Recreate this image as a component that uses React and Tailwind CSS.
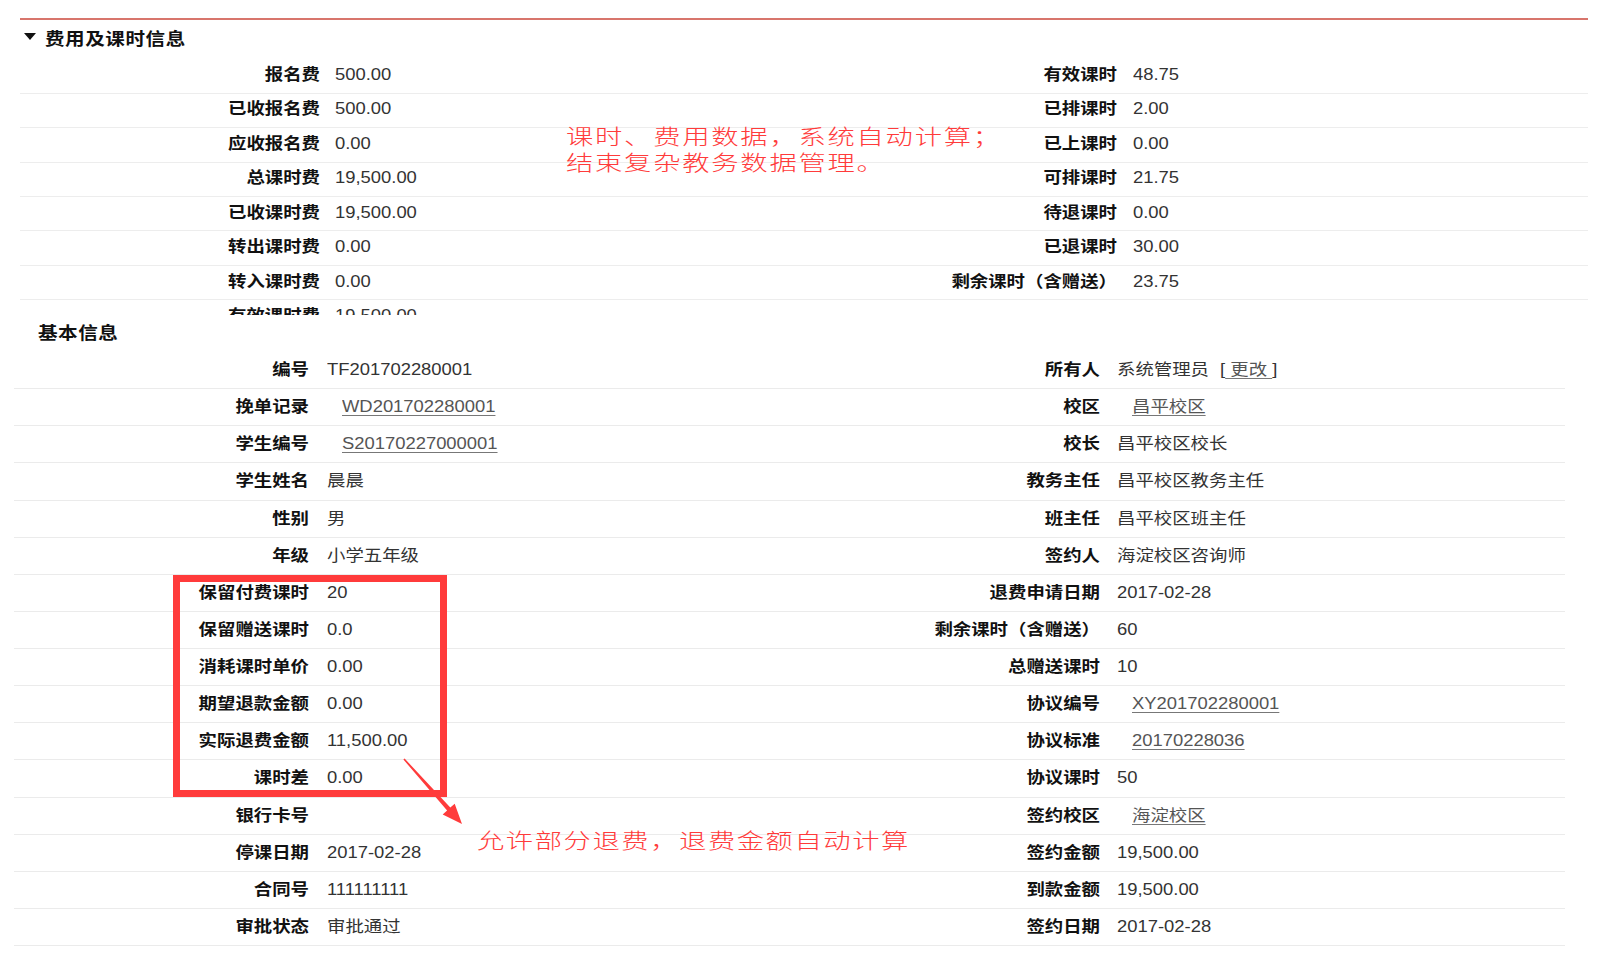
import React from "react";

const topRows = [
  ["报名费", "500.00", "有效课时", "48.75"],
  ["已收报名费", "500.00", "已排课时", "2.00"],
  ["应收报名费", "0.00", "已上课时", "0.00"],
  ["总课时费", "19,500.00", "可排课时", "21.75"],
  ["已收课时费", "19,500.00", "待退课时", "0.00"],
  ["转出课时费", "0.00", "已退课时", "30.00"],
  ["转入课时费", "0.00", "剩余课时（含赠送）", "23.75"],
  ["有效课时费", "19,500.00", "", ""],
];

const L = (t) => ({ t, link: true });

const bottomRows = [
  ["编号", "TF201702280001", "所有人", "OWNER"],
  ["挽单记录", L("WD201702280001"), "校区", L("昌平校区")],
  ["学生编号", L("S20170227000001"), "校长", "昌平校区校长"],
  ["学生姓名", "晨晨", "教务主任", "昌平校区教务主任"],
  ["性别", "男", "班主任", "昌平校区班主任"],
  ["年级", "小学五年级", "签约人", "海淀校区咨询师"],
  ["保留付费课时", "20", "退费申请日期", "2017-02-28"],
  ["保留赠送课时", "0.0", "剩余课时（含赠送）", "60"],
  ["消耗课时单价", "0.00", "总赠送课时", "10"],
  ["期望退款金额", "0.00", "协议编号", L("XY201702280001")],
  ["实际退费金额", "11,500.00", "协议标准", L("20170228036")],
  ["课时差", "0.00", "协议课时", "50"],
  ["银行卡号", "", "签约校区", L("海淀校区")],
  ["停课日期", "2017-02-28", "签约金额", "19,500.00"],
  ["合同号", "111111111", "到款金额", "19,500.00"],
  ["审批状态", "审批通过", "签约日期", "2017-02-28"],
];

function Value({ v }) {
  if (!v) return null;
  if (v === "OWNER") {
    return (
      <span className="inline-block scale-x-[1.15] origin-left whitespace-pre text-[#333]">
        系统管理员
        <span className="ml-[9.6px]">[</span>
        <span className="underline underline-offset-[3px] decoration-[#777] text-[#555]">
          {"\u00a0更改\u00a0"}
        </span>
        <span>]</span>
      </span>
    );
  }
  if (typeof v === "object") {
    return (
      <span className="ml-[15px] inline-block scale-x-[1.15] origin-left text-[#555] underline underline-offset-[3px] decoration-[#777]">
        {v.t}
      </span>
    );
  }
  return <span className="inline-block scale-x-[1.15] origin-left text-[#333]">{v}</span>;
}

function Label({ t }) {
  return <span className="inline-block scale-x-[1.15] origin-right font-bold text-[#111]">{t}</span>;
}

function Triangle() {
  return (
    <svg width="12" height="7" viewBox="0 0 12 7" className="mb-[6px] ml-[4px] shrink-0">
      <polygon points="0,0 12,0 6,7" fill="#111" />
    </svg>
  );
}

export default function App() {
  return (
    <div className="relative w-[1604px] h-[966px] overflow-hidden bg-white font-['Liberation_Sans','Noto_Sans_CJK_SC',sans-serif] text-[16px] leading-none text-black">
      {/* 费用及课时信息 */}
      <div className="h-[315px] overflow-hidden pt-[18px] pl-[20px] pr-[16px]">
        <div className="h-[2px] bg-[#d8756c]" />
        <div className="h-[39.3px] flex items-center">
          <Triangle />
          <span className="ml-[9px] inline-block scale-x-[1.15] origin-left text-[17px] font-bold tracking-[0.5px] text-[#111]">
            费用及课时信息
          </span>
        </div>
        {topRows.map((r, i) => (
          <div key={i} className="h-[34.43px] flex items-center border-b border-[#ededed] pb-[2px]">
            <div className="w-[300px] text-right">
              <Label t={r[0]} />
            </div>
            <div className="w-[515px] pl-[15px]">
              <Value v={r[1]} />
            </div>
            <div className="w-[282px] text-right">
              <Label t={r[2]} />
            </div>
            <div className="flex-1 pl-[16px]">
              <Value v={r[3]} />
            </div>
          </div>
        ))}
      </div>

      {/* 基本信息 */}
      <div className="pl-[14px] w-[1565px]">
        <div className="h-[37px] flex items-center pl-[24px]">
          <span className="inline-block scale-x-[1.15] origin-left text-[17px] font-bold tracking-[0.5px] text-[#111]">
            基本信息
          </span>
        </div>
        {bottomRows.map((r, i) => (
          <div key={i} className="h-[37.13px] flex items-center border-b border-[#ebebeb]">
            <div className="w-[295.5px] text-right">
              <Label t={r[0]} />
            </div>
            <div className="w-[493px] pl-[17px]">
              <Value v={r[1]} />
            </div>
            <div className="w-[298px] text-right">
              <Label t={r[2]} />
            </div>
            <div className="flex-1 pl-[16px]">
              <Value v={r[3]} />
            </div>
          </div>
        ))}
      </div>

      {/* annotation 1 */}
      <div className="absolute left-[566px] top-[124px] text-[21px] leading-[26px] text-[#ff3b3b] font-light whitespace-nowrap">
        <div className="scale-x-[1.3] origin-left tracking-[1.35px]">课时、费用数据，系统自动计算；</div>
        <div className="scale-x-[1.3] origin-left tracking-[1.35px]">结束复杂教务数据管理。</div>
      </div>

      {/* red highlight box */}
      <div className="absolute left-[173px] top-[575px] w-[274px] h-[222px] border-[7px] border-[#ff3b3b]" />

      {/* arrow */}
      <svg className="absolute left-[395px] top-[750px]" width="75" height="85" viewBox="0 0 75 85">
        <polygon
          points="8.4,9.5 52.1,60.6 47.7,64.4 67,74 59.7,53.8 55.3,57.6 9.6,8.5"
          fill="#ff3b3b"
        />
      </svg>

      {/* annotation 2 */}
      <div className="absolute left-[477px] top-[828px] text-[21px] leading-[26px] text-[#ff3b3b] font-light whitespace-nowrap">
        <div className="scale-x-[1.3] origin-left tracking-[1.2px]">允许部分退费，退费金额自动计算</div>
      </div>
    </div>
  );
}
